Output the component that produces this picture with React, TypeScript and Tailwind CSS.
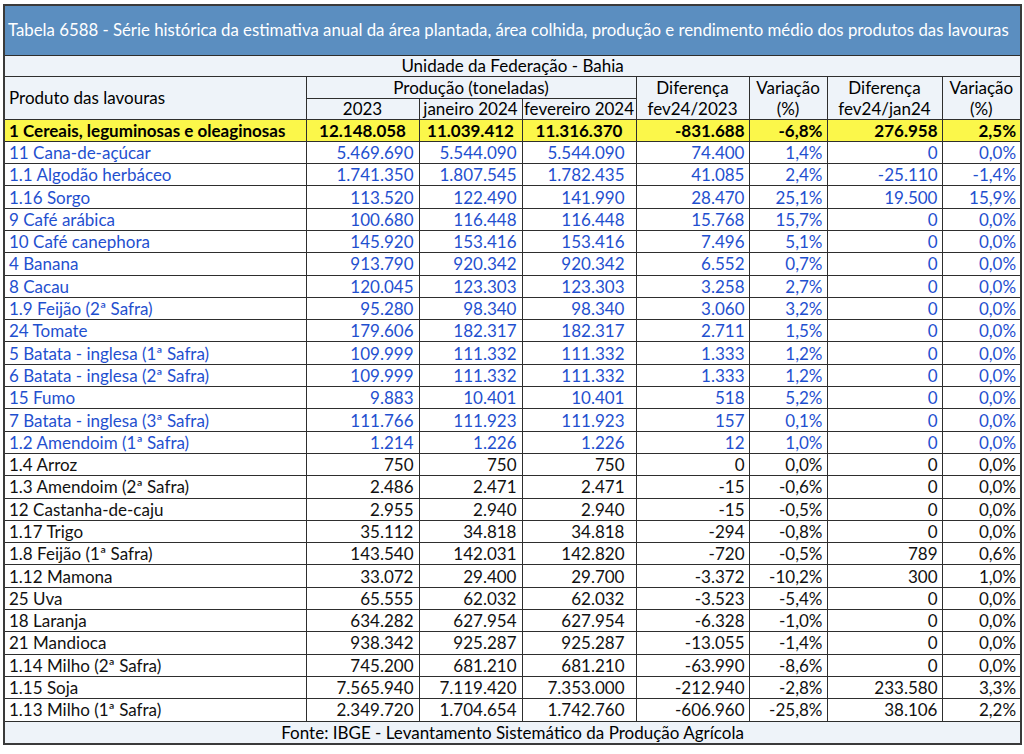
const rows: [string, string, string, string, string, string, string, string][] = [
  ["11 Cana-de-açúcar", "5.469.690", "5.544.090", "5.544.090", "74.400", "1,4%", "0", "0,0%"],
  ["1.1 Algodão herbáceo", "1.741.350", "1.807.545", "1.782.435", "41.085", "2,4%", "-25.110", "-1,4%"],
  ["1.16 Sorgo", "113.520", "122.490", "141.990", "28.470", "25,1%", "19.500", "15,9%"],
  ["9 Café arábica", "100.680", "116.448", "116.448", "15.768", "15,7%", "0", "0,0%"],
  ["10 Café canephora", "145.920", "153.416", "153.416", "7.496", "5,1%", "0", "0,0%"],
  ["4 Banana", "913.790", "920.342", "920.342", "6.552", "0,7%", "0", "0,0%"],
  ["8 Cacau", "120.045", "123.303", "123.303", "3.258", "2,7%", "0", "0,0%"],
  ["1.9 Feijão (2ª Safra)", "95.280", "98.340", "98.340", "3.060", "3,2%", "0", "0,0%"],
  ["24 Tomate", "179.606", "182.317", "182.317", "2.711", "1,5%", "0", "0,0%"],
  ["5 Batata - inglesa (1ª Safra)", "109.999", "111.332", "111.332", "1.333", "1,2%", "0", "0,0%"],
  ["6 Batata - inglesa (2ª Safra)", "109.999", "111.332", "111.332", "1.333", "1,2%", "0", "0,0%"],
  ["15 Fumo", "9.883", "10.401", "10.401", "518", "5,2%", "0", "0,0%"],
  ["7 Batata - inglesa (3ª Safra)", "111.766", "111.923", "111.923", "157", "0,1%", "0", "0,0%"],
  ["1.2 Amendoim (1ª Safra)", "1.214", "1.226", "1.226", "12", "1,0%", "0", "0,0%"],
  ["1.4 Arroz", "750", "750", "750", "0", "0,0%", "0", "0,0%"],
  ["1.3 Amendoim (2ª Safra)", "2.486", "2.471", "2.471", "-15", "-0,6%", "0", "0,0%"],
  ["12 Castanha-de-caju", "2.955", "2.940", "2.940", "-15", "-0,5%", "0", "0,0%"],
  ["1.17 Trigo", "35.112", "34.818", "34.818", "-294", "-0,8%", "0", "0,0%"],
  ["1.8 Feijão (1ª Safra)", "143.540", "142.031", "142.820", "-720", "-0,5%", "789", "0,6%"],
  ["1.12 Mamona", "33.072", "29.400", "29.700", "-3.372", "-10,2%", "300", "1,0%"],
  ["25 Uva", "65.555", "62.032", "62.032", "-3.523", "-5,4%", "0", "0,0%"],
  ["18 Laranja", "634.282", "627.954", "627.954", "-6.328", "-1,0%", "0", "0,0%"],
  ["21 Mandioca", "938.342", "925.287", "925.287", "-13.055", "-1,4%", "0", "0,0%"],
  ["1.14 Milho (2ª Safra)", "745.200", "681.210", "681.210", "-63.990", "-8,6%", "0", "0,0%"],
  ["1.15 Soja", "7.565.940", "7.119.420", "7.353.000", "-212.940", "-2,8%", "233.580", "3,3%"],
  ["1.13 Milho (1ª Safra)", "2.349.720", "1.704.654", "1.742.760", "-606.960", "-25,8%", "38.106", "2,2%"],
];

const cell = "border border-[#2e2e2e] py-0 whitespace-nowrap";
// padding per numeric column (2023, jan, fev, dif, var, dif, var)
const padR = ["pl-[3px] pr-[5px]", "pl-[3px] pr-[5px]", "pl-[3px] pr-[11px]", "pl-[3px] pr-[4px]", "pl-[3px] pr-[4px]", "pl-[3px] pr-[4px]", "pl-[3px] pr-[4px]"];

export default function App() {
  return (
    <div className="min-h-screen bg-white pl-[3px] pt-[4px] font-['Lato','Noto_Sans',sans-serif] text-[17px] text-black">
      <table className="w-[1017px] table-fixed border-collapse border-2 border-[#3a3a3a] leading-none">
        <colgroup>
          <col className="w-[302px]" />
          <col className="w-[113px]" />
          <col className="w-[103px]" />
          <col className="w-[114px]" />
          <col className="w-[113px]" />
          <col className="w-[78px]" />
          <col className="w-[115px]" />
          <col className="w-[79px]" />
        </colgroup>
        <thead>
          <tr className="h-[50px] bg-[#5b8ec0]">
            <td colSpan={8} className={`${cell} px-[3px] text-left text-[16.8px] text-white`}>
              Tabela 6588 - Série histórica da estimativa anual da área plantada, área colhida, produção e rendimento médio dos produtos das lavouras
            </td>
          </tr>
          <tr className="h-[21px] bg-[#eef3f9]">
            <td colSpan={8} className={`${cell} text-center`}>
              Unidade da Federação - Bahia
            </td>
          </tr>
          <tr className="h-[22px] bg-[#eef3f9]">
            <td rowSpan={2} className={`${cell} px-[4px] text-left`}>
              Produto das lavouras
            </td>
            <td colSpan={3} className={`${cell} text-center`}>
              Produção (toneladas)
            </td>
            <td rowSpan={2} className={`${cell} text-center`}>
              <div className="leading-[21px]">Diferença</div>
              <div className="leading-[21px]">fev24/2023</div>
            </td>
            <td rowSpan={2} className={`${cell} text-center`}>
              <div className="leading-[21px]">Variação</div>
              <div className="leading-[21px]">(%)</div>
            </td>
            <td rowSpan={2} className={`${cell} text-center`}>
              <div className="leading-[21px]">Diferença</div>
              <div className="leading-[21px]">fev24/jan24</div>
            </td>
            <td rowSpan={2} className={`${cell} text-center`}>
              <div className="leading-[21px]">Variação</div>
              <div className="leading-[21px]">(%)</div>
            </td>
          </tr>
          <tr className="h-[21px] bg-[#eef3f9]">
            <td className={`${cell} text-center`}>2023</td>
            <td className={`${cell} text-center`}>janeiro 2024</td>
            <td className={`${cell} text-center`}>fevereiro 2024</td>
          </tr>
        </thead>
        <tbody>
          <tr className="h-[22.3px] bg-[#fbf74a] font-bold">
            <td className={`${cell} px-[4px] text-left`}>1 Cereais, leguminosas e oleaginosas</td>
            <td className={`${cell} text-center`}>12.148.058</td>
            <td className={`${cell} text-center`}>11.039.412</td>
            <td className={`${cell} text-center`}>11.316.370</td>
            <td className={`${cell} pr-[4px] text-right`}>-831.688</td>
            <td className={`${cell} pr-[4px] text-right`}>-6,8%</td>
            <td className={`${cell} pr-[4px] text-right`}>276.958</td>
            <td className={`${cell} pr-[4px] text-right`}>2,5%</td>
          </tr>
          {rows.map((r, i) => (
            <tr key={r[0]} className={`h-[22.3px] ${i < 14 ? "text-[#1f50cf]" : "text-[#111]"}`}>
              <td className={`${cell} px-[4px] text-left`}>{r[0]}</td>
              {r.slice(1).map((v, j) => (
                <td key={j} className={`${cell} ${padR[j]} text-right`}>
                  {v}
                </td>
              ))}
            </tr>
          ))}
          <tr className="h-[23px] bg-[#eef3f9]">
            <td colSpan={8} className={`${cell} text-center`}>
              Fonte: IBGE - Levantamento Sistemático da Produção Agrícola
            </td>
          </tr>
        </tbody>
      </table>
    </div>
  );
}
